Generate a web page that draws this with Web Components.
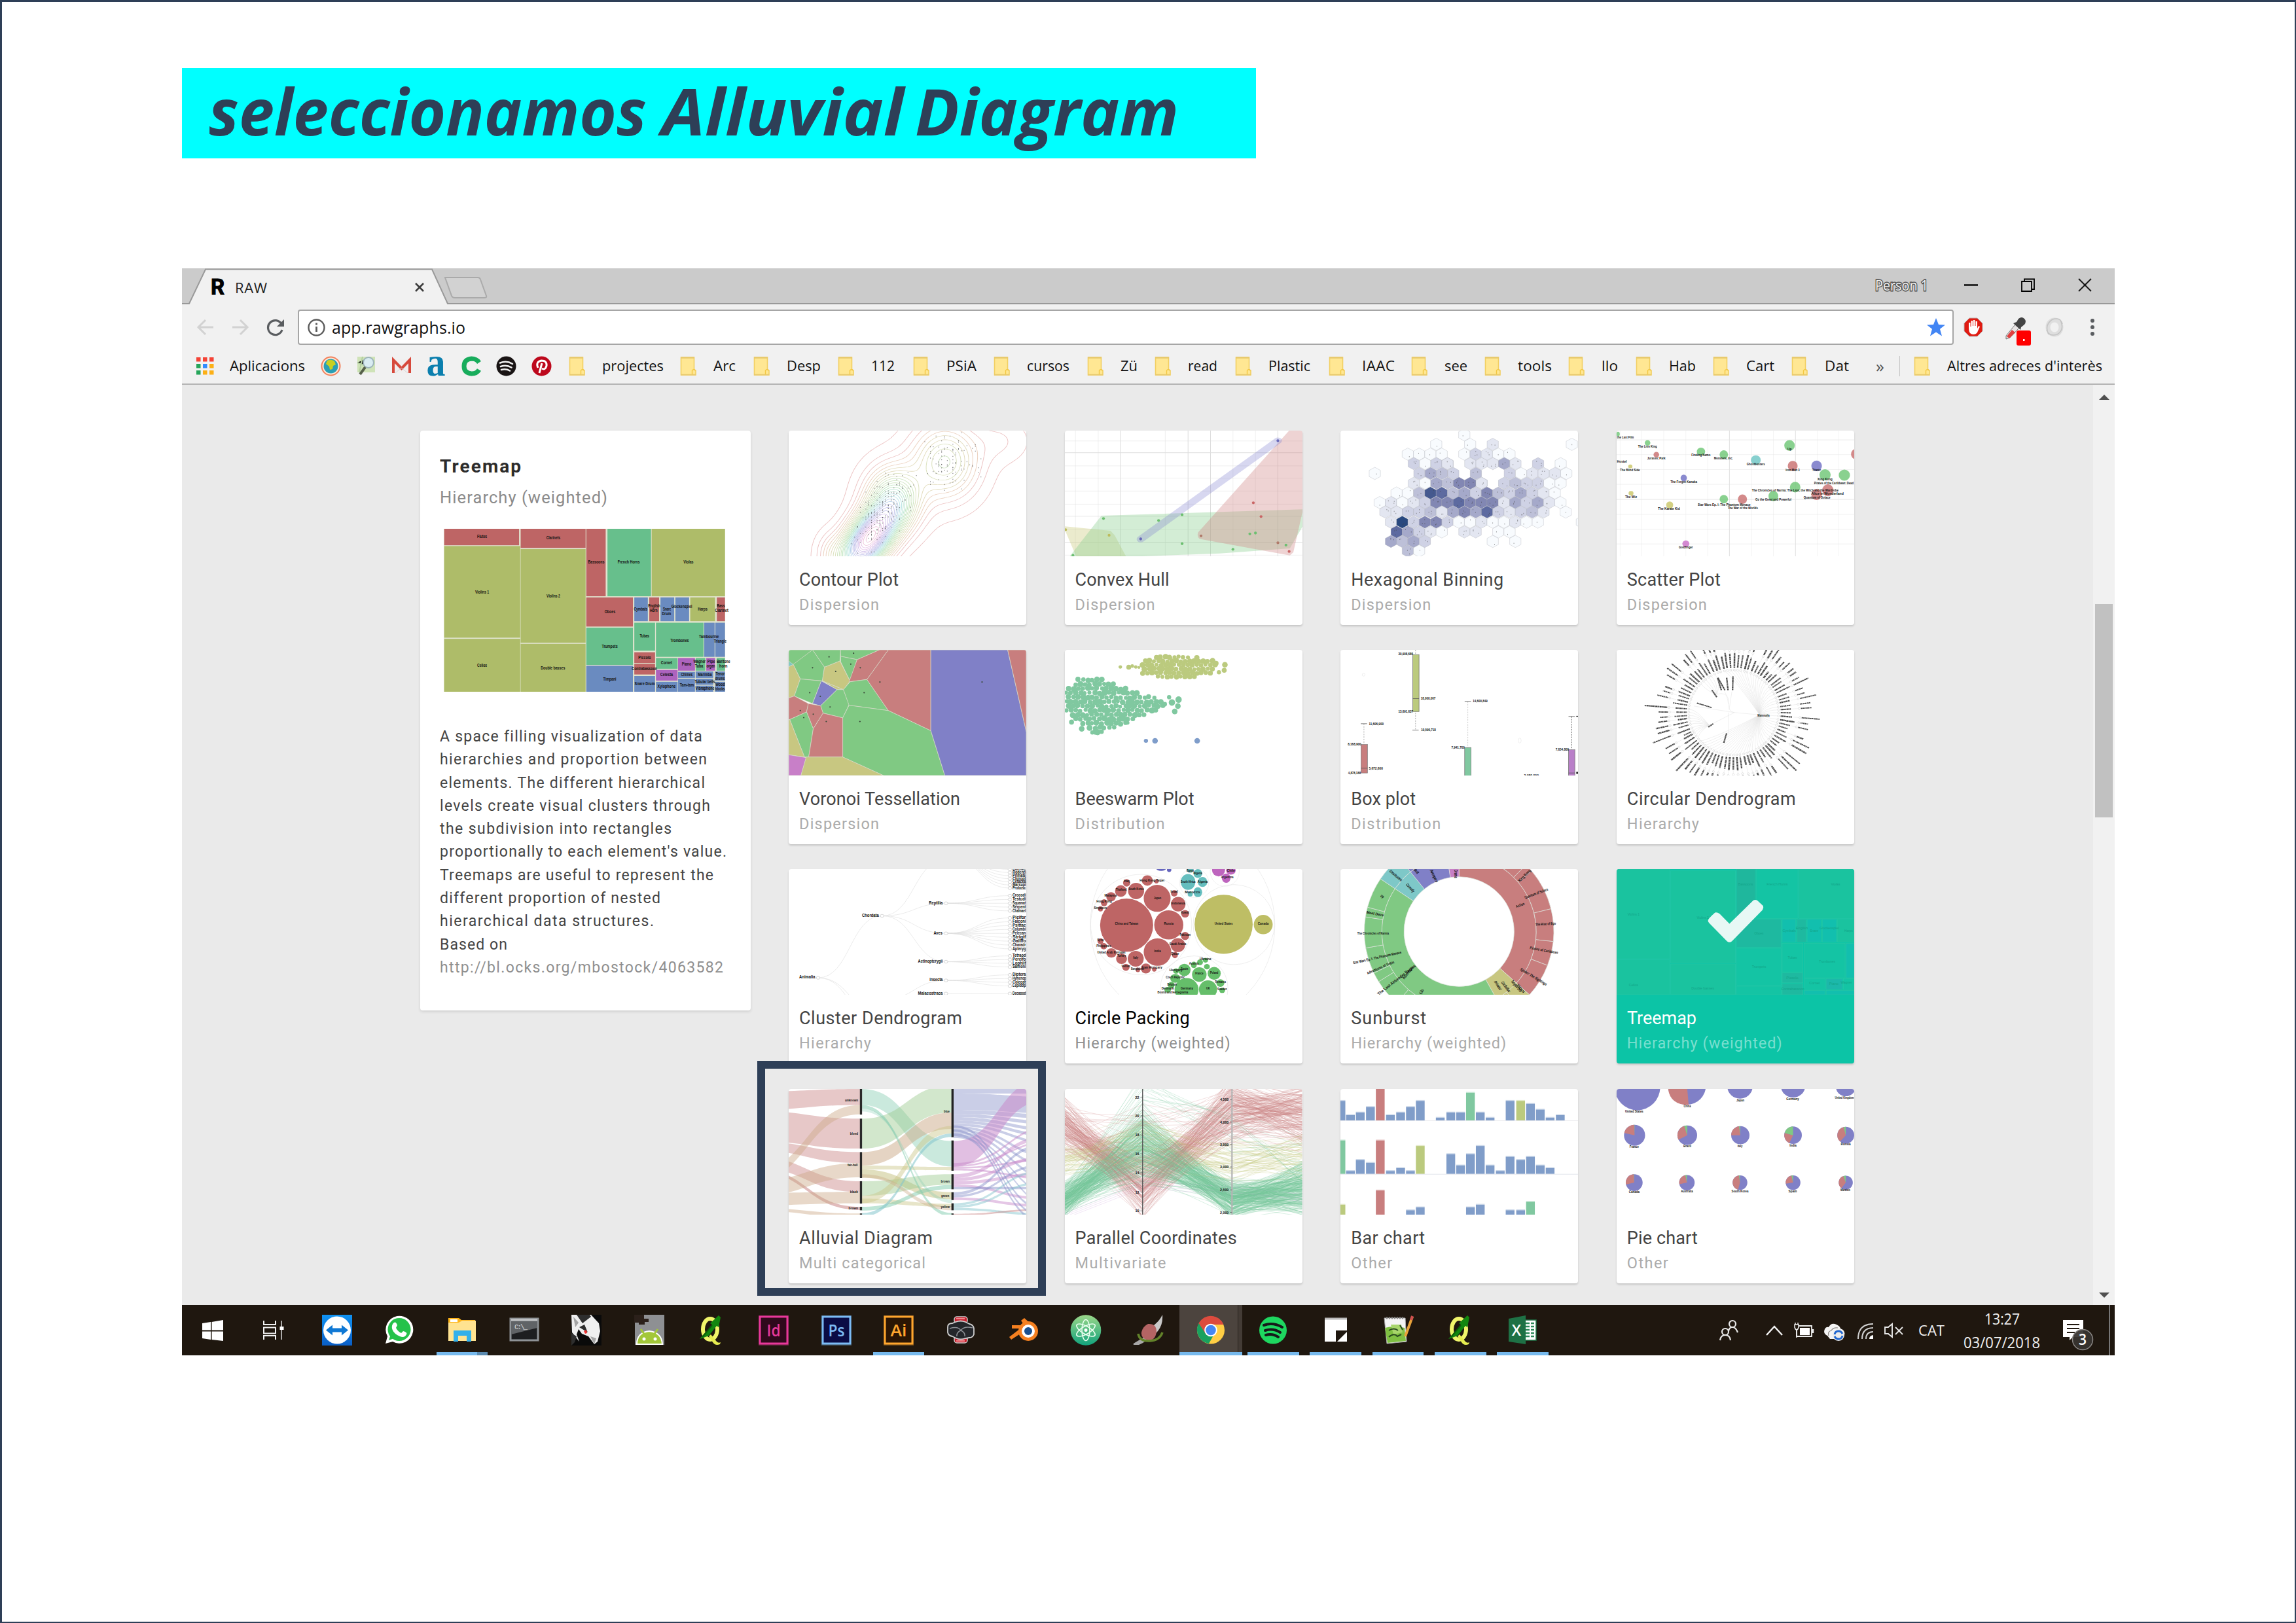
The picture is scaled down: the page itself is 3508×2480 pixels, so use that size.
<!DOCTYPE html>
<html lang="ca">
<head>
<meta charset="utf-8">
<title>seleccionamos Alluvial Diagram</title>
<style>
html,body{margin:0;padding:0;background:#fff}
body{font-family:"Open Sans","Noto Sans",sans-serif}
</style>
</head>
<body>
<slide-page>
  <title-banner slot="banner">seleccionamos Alluvial Diagram</title-banner>
  <browser-window>
    <tab-strip></tab-strip>
    <tool-bar></tool-bar>
    <bookmark-bar></bookmark-bar>
    <page-view></page-view>
    <task-bar></task-bar>
  </browser-window>
</slide-page>
<script>
const define=(name,html,after)=>customElements.define(name,class extends HTMLElement{
  connectedCallback(){
    if(this.shadowRoot)return;
    const r=this.attachShadow({mode:'open'});
    r.innerHTML=typeof html==='function'?html(this):html;
    if(after)after(this,r);
  }
});
/* Seeded generator so every render is the same. */
const rng=s=>()=>{s=(s*1664525+1013904223)>>>0;return s/4294967296};
const f=n=>Math.round(n*10)/10;

/* One line of text set to a known measure. */
define('fit-text',el=>`<style>:host{display:inline-block;white-space:nowrap;width:${el.getAttribute('w')}px}span{display:inline-block;transform-origin:0 50%}</style><span><slot></slot></span>`,(el,r)=>{
  const s=r.querySelector('span'),w=+el.getAttribute('w'),n=el.textContent.length,m=s.getBoundingClientRect().width;
  if(!m)return;
  if(m>w||el.hasAttribute('stretch'))s.style.transform=`scaleX(${w/m})`;
  else s.style.letterSpacing=(w-m)/Math.max(1,n-1)+'px';
});

/* ---------- icons: name -> [width, height, markup] ---------- */
const qgis=`<ellipse cx="22" cy="22" rx="11" ry="16" fill="none" stroke="#f0f56a" stroke-width="6"/><path d="M23 30l9 11q3 3 6 1l-1 3q-7 3-11-3l-6-9z" fill="#e6ec50"/><path d="M6 37l5-6 7-7 7-9-3-2 13-12 3 3-3 15-3-2-12 15-8 3z" fill="#12860f"/><path d="M10 34l15-18" stroke="#0c5c0a" stroke-width="2"/>`;
const adobe=(t,c,b)=>`<rect x="1" y="1" width="46" height="46" fill="${c}" opacity=".35"/><rect x="3" y="3" width="42" height="41" fill="${b}" stroke="${c}" stroke-width="3"/><text x="24" y="33" text-anchor="middle" font-family="Open Sans,sans-serif" font-weight="600" font-size="26" textLength="${t==='Id'?21:25}" lengthAdjust="spacingAndGlyphs" fill="${c}">${t}</text>`;
const I={
 back:[26,26,`<path d="M25 13H3M13 2L2 13l11 11" fill="none" stroke="#d2d2d2" stroke-width="3"/>`],
 forward:[26,26,`<path d="M1 13h22M13 2l11 11-11 11" fill="none" stroke="#d2d2d2" stroke-width="3"/>`],
 reload:[28,28,`<path d="M24 18a11 11 0 1 1-1-9" fill="none" stroke="#5a5d60" stroke-width="3.2"/><path d="M27 2v11H16z" fill="#5a5d60"/>`],
 info:[27,27,`<circle cx="13.5" cy="13.5" r="12" fill="none" stroke="#5a5a5a" stroke-width="2.4"/><path d="M13.5 12v8M13.5 6.500v3" stroke="#5a5a5a" stroke-width="2.8"/>`],
 star:[28,28,`<path d="M14 0l4 10 10 .5-8 6.300 3 10.700-9-6-9 6 3-10.700-8-6.300L10 10z" fill="#4285f4"/>`],
 hand:[30,30,`<path d="M9 1h12l8 8v12l-8 8H9l-8-8V9z" fill="#e01b12" stroke="#b9b0b0"/><path d="M8 16V8h2.500v6h1V5H14v8h1V4h2.500v9h1V6H21v11l2-4 2 1-4 9q-2 3-6 3-7 0-7-10z" fill="#fff"/>`],
 dropper:[44,44,`<path d="M4 28l14-17 6 5-14 15-6 2z" fill="#e8e4e4" stroke="#777"/><path d="M5 29l8-10 5 4-9 9z" fill="#e04040"/><path d="M15 9l5-2 3-5q5-4 9 0t0 9l-5 4-1 4z" fill="#444"/><rect x="20" y="20" width="22" height="23" rx="3" fill="#f00"/><rect x="30" y="33" width="2.500" height="3" fill="#fff"/>`],
 swirl:[30,32,`<ellipse cx="15" cy="16" rx="10" ry="11" fill="none" stroke="#dedede" stroke-width="7"/><path d="M6 27Q-1 12 12 4q12-4 15 7M24 5q7 15-5 22-12 4-16-7" fill="none" stroke="#c4c4c4" stroke-width="1.500"/>`],
 dots:[8,28,`<circle cx="4" cy="4" r="3" fill="#5a5d60"/><circle cx="4" cy="14" r="3" fill="#5a5d60"/><circle cx="4" cy="24" r="3" fill="#5a5d60"/>`],
 apps:[27,27,['#f44336','#f44336','#f44336','#25a55a','#2f8cff','#fcb016','#25a55a','#fcb016','#fcb016'].map((c,i)=>`<rect x="${i%3*10}" y="${(i/3|0)*10}" width="6.500" height="6.500" fill="${c}"/>`).join('')],
 globe:[31,31,`<circle cx="15.500" cy="15.500" r="14" fill="#ffe9da" stroke="#f2805a" stroke-width="2"/><circle cx="15.500" cy="15.500" r="11" fill="#2b9fb4"/><path d="M10 7q6-3 11 1l2 5-4 2-1 5-4 1-1-5-5-4z" fill="#c8d021"/>`],
 map:[29,30,`<path d="M1 1h27v24H1z" fill="#cfe3b8"/><path d="M1 10l10 4L20 2M4 25l5-24" stroke="#b4cfa0" stroke-width="2"/><circle cx="18" cy="10" r="8" fill="#d9ecf2" stroke="#9db4ba" stroke-width="2"/><path d="M13 17L5 28" stroke="#56604a" stroke-width="4"/>`],
 gmail:[29,26,`<path d="M1 3h27v21H1z" fill="#f1efef"/><path d="M2 24V4l12.500 13L27 4v20" fill="none" stroke="#d7493c" stroke-width="4"/><path d="M5 24l9-8 10 8" fill="none" stroke="#d5d5d5"/>`],
 aserif:[30,32,`<text x="15" y="31" text-anchor="middle" font-family="Liberation Serif,serif" font-weight="bold" font-size="62" textLength="29" lengthAdjust="spacingAndGlyphs" fill="#0b7fae">a</text>`],
 cgreen:[30,31,`<path d="M27 10Q23 4 15.500 4 4 5 4 15.500T15.500 27q8 0 11.500-6" fill="none" stroke="#18ac5c" stroke-width="7"/>`],
 spot:[31,31,`<circle cx="15.500" cy="15.500" r="15" fill="#191414"/><path d="M6 10.500q10-4 19 1.500M7 16q9-3 16.500 1.500M8 21q7-2 13 1.500" fill="none" stroke="#f1f1f1" stroke-width="2.600" stroke-linecap="round"/>`],
 pin:[31,31,`<circle cx="15.500" cy="15.500" r="15" fill="#bd081c"/><path d="M10 18q-4-9 5-11 9 0 8 8-2 7-7 4M16 11l-4 15" fill="none" stroke="#fff" stroke-width="3"/>`],
 folder:[25,29,`<path d="M1.500 1h20v19l2.500 1v7H1.500z" fill="#ffe793" stroke="#f2cf62" stroke-width="1.600"/><path d="M1 1.500h21" stroke="#e7c96d" stroke-width="2.500"/><path d="M1 27.500h23" stroke="#e7c96d" stroke-width="1.600"/><path d="M18.500 27v-6q3-3 5 0" fill="none" stroke="#f3c843" stroke-width="1.400"/>`],
 min:[21,21,`<path d="M0 10.500h21" stroke="#000" stroke-width="2.400"/>`],
 restore:[21,21,`<path d="M1 5h15v15H1zM5 5V1.500h15V17h-4" fill="none" stroke="#000" stroke-width="1.800"/>`],
 closewin:[21,21,`<path d="M1 1l19 19M20 1L1 20" stroke="#111" stroke-width="1.800"/>`],
 closetab:[14,14,`<path d="M1 1l12 12M13 1L1 13" stroke="#3c3c3c" stroke-width="2.500"/>`],
 win:[48,48,`<path d="M8 13l13-2v12.500H8zM22.500 11L40 8v15.500H22.500zM8 25.500h13V38L8 36zM22.500 25.500H40V40l-17.500-2z" fill="#fff"/>`],
 task:[48,48,`<path d="M9 9v6h18V9M9 38v-6h18v6M9 19.500h18v9H9z" fill="none" stroke="#f2f2f2" stroke-width="2"/><path d="M36 9v29" stroke="#ddd" stroke-width="1.500"/><rect x="33.500" y="18" width="6" height="5" fill="#fff"/>`],
 tv:[48,48,`<defs><linearGradient id="g" x2="0" y2="1"><stop stop-color="#1093f2"/><stop offset="1" stop-color="#0a5ec6"/></linearGradient></defs><rect x="1" y="0" width="46" height="47" fill="url(#g)"/><circle cx="24" cy="23.500" r="21" fill="#fff"/><path d="M7 23.500l10-8v5h14v-5l10 8-10 8v-5H17v5z" fill="#0f78d4"/>`],
 wa:[48,48,`<path d="M3 44l3-11a21 21 0 1 1 8 8z" fill="#fff"/><circle cx="24" cy="22.500" r="17.500" fill="#25c24a"/><path d="M8 39l3-9 5 6z" fill="#25c24a"/><path d="M16 12q3-2 5 4l-2 4q3 6 8 8l3-3q7 2 5 5-3 6-10 3-10-4-12-12-1-6 3-9z" fill="#fff"/>`],
 explorer:[48,48,`<path d="M3 5h16l4 3h21v8H3z" fill="#ffb51a"/><rect x="6" y="7" width="11" height="4" fill="#fff"/><path d="M3 12h16l5-3h21v31H3z" fill="#ffe391"/><path d="M11 41V24h27v17h-7v-9H18v9z" fill="#33b0ea"/>`],
 cmd:[48,48,`<rect x="3" y="6" width="42" height="33" fill="#1d1e20" stroke="#8e9296" stroke-width="3"/><path d="M4 8h40v12L4 30z" fill="#606366"/><path d="M4 8h40" stroke="#c4c6c8" stroke-width="3"/><text x="9" y="22" font-family="Liberation Mono,monospace" font-size="11" textLength="20" fill="#ddd">C:\\_</text>`],
 rhino:[48,48,`<rect x="1" y="0" width="46" height="47" fill="#0a0a0a"/><path d="M1 0h30l12 13 2 12-4 16-5 4-9-12-10-4-5-7-3 8 4 11L2 27z" fill="#efefef"/><path d="M9 0l9 13L31 3 29 0zM13 19l13 8-5-12zM1 28l8 5-3 9-5 5z" fill="#2e2e2e"/><path d="M30 33l6 12 3-9zM4 3l3 16 5-7z" fill="#a4a4a4"/><path d="M20 25l4-2 1 5-3 1z" fill="#e33"/>`],
 droid:[48,48,`<rect x="2" y="0" width="45" height="46" fill="#8e9093"/><path d="M1 0h15v6h7v5h-6v4h-9v-3H1z" fill="#2b201a"/><path d="M5 45q0-18 19-20 19 2 20 20z" fill="#a3c739" stroke="#fff" stroke-width="2"/><path d="M11 22l5 7M37 22l-5 7" stroke="#a3c739" stroke-width="3"/><circle cx="16" cy="37" r="2.500" fill="#fff"/><circle cx="33" cy="37" r="2.500" fill="#fff"/>`],
 qgis:[48,48,qgis],
 id:[48,48,adobe('Id','#e8389a','#30091c')],
 ps:[48,48,adobe('Ps','#7cbcf5','#0a0c45')],
 ai:[48,48,adobe('Ai','#ffa62e','#2b1604')],
 robot:[48,48,`<rect x="14" y="3" width="20" height="10" rx="4" fill="#c71f2d" stroke="#ccc" stroke-width="1.500"/><rect x="14" y="33" width="20" height="10" rx="4" fill="#c71f2d" stroke="#ccc" stroke-width="1.500"/><path d="M17 6h13M17 40h13" stroke="#f1888d" stroke-width="2"/><path d="M4 19q0-6 7-6l5-2q8-3 15 0l6 3q6 1 7 7v9q-2 5-7 5l-6 1q-7 3-14 0l-6-3q-6-1-7-6z" fill="#24262a" stroke="#d0d0d0" stroke-width="1.800"/><path d="M7 21q13-4 17 3-7 3-6 9M42 20q-13-3-18 4 7 3 6 9" fill="none" stroke="#8d9095" stroke-width="1.500"/>`],
 blender:[48,48,`<path d="M2 34l17-13H6v-5h19l-5-7 5-4 20 18-20 2L5 38z" fill="#f58020"/><circle cx="31" cy="25" r="15" fill="#f58020"/><circle cx="31" cy="25" r="10" fill="#fff"/><circle cx="31" cy="25" r="6" fill="#1a4f8e"/>`],
 atom:[48,48,`<defs><linearGradient id="g" x2="0" y2="1"><stop stop-color="#9bd789"/><stop offset="1" stop-color="#12a37c"/></linearGradient></defs><circle cx="24" cy="23.500" r="23.300" fill="url(#g)"/><g fill="none" stroke="#eafff0" stroke-width="1.600"><ellipse cx="24" cy="23.500" rx="6" ry="16"/><ellipse cx="24" cy="23.500" rx="6" ry="16" transform="rotate(60 24 23.500)"/><ellipse cx="24" cy="23.500" rx="6" ry="16" transform="rotate(120 24 23.500)"/></g><circle cx="24" cy="23.500" r="2.500" fill="#fff"/>`],
 bird:[48,48,`<path d="M46 0q2 25-22 36L16 25q22-8 30-25z" fill="#c9c9c9"/><path d="M3 46q-4-1 2-4l15-9 2 6q-5 4-12 7z" fill="#a8a8a8"/><path d="M24 14q13-1 13 12-2 14-13 13-11-3-10-12 2-9 10-13z" fill="#b46464"/><path d="M9 29q2 12 18 11 15-1 19-13" fill="none" stroke="#63832a" stroke-width="3.500"/>`],
 chrome:[48,48,`<circle cx="24" cy="23.500" r="21" fill="#ffce44"/><path d="M24 23.500L5.500 13a21 21 0 0 0 15.500 31l9-16z" fill="#19a15f"/><path d="M5.500 13a21 21 0 0 1 38 2H24l-8 14z" fill="#dd4b3e"/><circle cx="24" cy="23.500" r="9.800" fill="#fff"/><circle cx="24" cy="23.500" r="7.800" fill="#4587f2"/>`],
 spotg:[48,48,`<circle cx="24" cy="23.500" r="21" fill="#1ed760"/><path d="M10 16q14-5 28 3M12 24q12-4 23 3M13 31q10-3 19 3" fill="none" stroke="#16191a" stroke-width="4" stroke-linecap="round"/>`],
 sticky:[48,48,`<path d="M7 6h34v18H24v17H7z" fill="#fff"/><path d="M7 6h34" stroke="#bbb" stroke-width="3"/><path d="M41 26L26 41h15z" fill="#fff"/>`],
 npp:[48,48,`<path d="M3 5h32l2 36-30 3z" fill="#f4f4f4" stroke="#aaa"/><path d="M4 20q14-4 30 0l2 20-28 3z" fill="#7fbf42"/><path d="M13 15h16l2 12-14 3z" fill="#a7d56b"/><path d="M10 24q8-5 14 0M27 16l4 7M10 34q8-7 13-1l6-3" fill="none" stroke="#2a4a1f" stroke-width="2"/><path d="M6 5h28" stroke="#888" stroke-width="3" stroke-dasharray="2 2"/><path d="M46 3l-11 30" stroke="#e8a33a" stroke-width="4"/><path d="M46 2l-2 6" stroke="#d05050" stroke-width="4"/>`],
 excel:[48,48,`<rect x="22" y="8" width="22" height="31" fill="#fff" stroke="#1e7145" stroke-width="1.500"/><path d="M28 13h6M28 18h6M28 23h6M28 28h6M28 33h6M36 13h5M36 18h5M36 23h5M36 28h5M36 33h5" stroke="#2c8a5a" stroke-width="2.500"/><path d="M2 6l26-5v44L2 41z" fill="#1e7145"/><text x="14" y="32" text-anchor="middle" font-family="Open Sans,sans-serif" font-weight="600" font-size="23" fill="#fff">X</text>`],
 people:[30,32,`<g fill="none" stroke="#e8e8e8" stroke-width="2.200"><circle cx="20" cy="6" r="5"/><path d="M14 17q1-6 6-6t8 8"/><circle cx="9" cy="18" r="5"/><path d="M1 31q1-8 8-8t8 8"/></g>`],
 chev:[26,16,`<path d="M1 15L13 2l12 13" fill="none" stroke="#f2f2f2" stroke-width="2.400"/>`],
 batt:[31,24,`<path d="M4 5h23v16H4z" fill="none" stroke="#eee" stroke-width="1.800"/><rect x="9" y="8" width="15" height="11" fill="#fff"/><path d="M29 10v6" stroke="#eee" stroke-width="2.500"/><path d="M1 3h6v4q-1 4-3 4T1 7zM2 3V0M6 3V0M4 11v12" stroke="#eee" stroke-width="1.500" fill="#1f170f"/>`],
 cloud:[34,28,`<path d="M5 20q-7-3-4-10 2-4 6-3 4-8 12-4 5 2 6 6 8 3 6 10l-6 6H9z" fill="#f4f4f4"/><path d="M7 20q-2-6 4-8 3-5 10-4" fill="none" stroke="#8d8a88" stroke-width="1.200"/><circle cx="22" cy="19" r="9" fill="#ececec"/><path d="M16 18q1-5 6-5 4 0 6 4M28 20q-1 5-6 5-4 0-6-4" fill="none" stroke="#1f66d0" stroke-width="2.800"/>`],
 wifi:[25,26,`<g fill="none" stroke="#cfcfcf" stroke-width="2"><path d="M1 25Q1 2 24 2"/><path d="M7 25Q7 8 24 8"/><path d="M13 25q0-11 11-11"/></g><path d="M18 25q0-5 6-6v6z" fill="#fff"/>`],
 mute:[31,24,`<path d="M1 7h5l6-5v20l-6-5H1z" fill="none" stroke="#e8e8e8" stroke-width="1.900"/><path d="M17 7l11 11M28 7L17 18" stroke="#e8e8e8" stroke-width="1.900"/>`],
 note:[48,48,`<path d="M1 0h31v26H16l-5 5v-5H1z" fill="#fff"/><path d="M7 7h19M7 13h19M7 19h12" stroke="#1f170f" stroke-width="2"/><circle cx="31" cy="30" r="15.500" fill="#383431" fill-opacity=".94" stroke="#8a8785" stroke-width="1.500"/><text x="31" y="38" text-anchor="middle" font-family="Open Sans,sans-serif" font-weight="600" font-size="23" textLength="12" lengthAdjust="spacingAndGlyphs" fill="#fff">3</text>`]
};
define('app-icon',el=>{const [w,h,m]=I[el.getAttribute('name')];
 return `<style>:host{display:block;flex:none;width:${w}px;height:${h}px}svg{display:block;overflow:visible}</style><svg width="${w}" height="${h}" viewBox="0 0 ${w} ${h}">${m}</svg>`});

/* ---------- chart pictures ---------- */
const T=(x,y,w,t,fs=11,rot=0,c='#111')=>`<text x="${x}" y="${y}" text-anchor="middle" textLength="${w}" lengthAdjust="spacingAndGlyphs" font-size="${fs}" fill="${c}"${c==='#111'?' font-weight="bold"':''}${rot?` transform="rotate(${rot} ${x} ${y})"`:''}>${t}</text>`;
const R=(x,y,x2,y2,c,o=1)=>`<rect x="${x}" y="${y}" width="${f(x2-x)}" height="${f(y2-y)}" fill="${c}" opacity="${o}"/>`;
const E=(x,y,rx,ry,c,o=1,s='')=>`<ellipse cx="${f(x)}" cy="${f(y)}" rx="${f(rx)}" ry="${f(ry)}" fill="${c}" opacity="${o}" ${s}/>`;
const R1='#be6565',O1='#aebc69',G1='#67bf8c',B1='#6a8bc0',P1='#ad63be';
const charts={
treemap(){
 const S=[[142,286,474,329,R1,'Flutes',310,310,44],[142,331,479,570,O1,'Violins 1',310,455,62],[142,573,479,711,O1,'Cellos',310,646,44],
 [481,286,769,336,R1,'Clarinets',626,314,62],[481,339,769,583,O1,'Violins 2',626,465,60],[481,586,769,711,O1,'Double basses',624,653,108],
 [772,286,858,462,R1,'Bassoons',816,377,72],[866,286,1059,462,G1,'French Horns',960,377,98],[1062,286,1387,462,O1,'Violas',1225,377,44],
 [772,465,979,541,R1,'Oboes',877,506,48],[772,544,979,641,G1,'Trumpets',876,597,70],[772,643,979,711,B1,'Timpani',876,682,58],
 [985,465,1045,527,B1,'Cymbals',1013,500,60],[1051,465,1095,527,R1,'English',1073,491,54],[1101,465,1162,527,B1,'Snare',1130,500,36],[1167,465,1228,527,B1,'Glockenspiel',1195,492,92],[1233,465,1343,527,O1,'Harps',1288,500,42],[1351,465,1387,527,R1,'Bass',1369,491,36],
 [985,531,1077,604,G1,'Tubas',1030,570,42],[1081,531,1292,620,G1,'Trombones',1186,582,82],[1295,531,1341,620,B1,'Tambourine',1316,571,88],[1344,531,1387,620,B1,'Triangle',1366,583,56],
 [985,608,1077,636,R1,'Piccolo',1031,626,56],[985,638,1077,666,R1,'Contrabassoon',1030,655,112],[985,670,1077,711,B1,'Snare Drum',1031,694,90],
 [1081,623,1177,651,G1,'Cornet',1128,640,50],[1081,654,1177,682,P1,'Celesta',1128,670,56],[1081,685,1177,711,B1,'Xylophone',1128,700,80],
 [1179,623,1254,656,P1,'Piano',1217,643,42],[1179,659,1254,675,B1,'Chimes',1218,670,52],[1179,677,1254,711,B1,'Tam-tam',1218,698,62],
 [1257,623,1300,656,G1,'Wagner',1274,636,54],[1304,623,1343,656,P1,'Pipe',1326,636,34],[1350,623,1387,656,G1,'Baritone',1380,636,60],
 [1257,658,1335,675,B1,'Marimba',1298,670,62],[1257,677,1335,693,B1,'Tubular bells',1298,689,90],[1257,695,1335,711,B1,'Vibraphone',1298,706,84],[1343,658,1387,682,B1,'Tenor',1366,668,40],[1343,685,1387,711,B1,'Wood',1366,696,42]];
 return ['140 286 1248 425',R(140,286,1388,711,'#c9cda8',.55)+S.map(s=>R(...s.slice(0,5))).join('')+S.map(s=>T(s[6],s[7],s[8],s[5],12)).join('')+
 [[1071,503,34,'Horn'],[1128,512,40,'Drum'],[1372,503,60,'Clarinet'],[1272,648,36,'Tuba'],[1324,648,38,'organ'],[1380,648,36,'horn'],[1365,680,42,'drums'],[1365,708,42,'blocks']].map(a=>T(...a,12)).join('')];
},
contour(){
 const th=Math.atan2(-240,120),c=Math.cos(th),s=Math.sin(th);
 const D=(x,y)=>{const dx=x-275,dy=y-430,u=dx*c+dy*s,v=-dx*s+dy*c;
  const e=x-345,g=y-285,p=x-492,q=y-153,r=x-650,t=y-80;
  return 1.1*Math.exp(-.5*(u*u/7800+v*v/1900))+.5*Math.exp(-.5*(e*e/2700+g*g/5800))+.38*Math.exp(-.5*(p*p/3900+q*q/7600))+.06*Math.exp(-.5*(r*r/2600+t*t/2600))+.1*Math.exp(-.5*((x-165)**2/700+(y-475)**2/2200))};
 const cols=['#edc4c4','#ecd2c0','#e3dcbd','#dce2bf','#cde5bf','#bfe5c1','#bce5d4','#bce5e6','#bcd4ec','#c2c2ea','#d2c0ea','#e6c2e8','#eec6dc'];
 const n=34,out=Array(n).fill('');const st=6,G=[];
 for(let j=0;j<=78;j++){G[j]=[];for(let i=0;i<=115;i++)G[j][i]=D(44+i*st,38+j*st)}
 for(let k=0;k<n;k++){const L=.02+k*.039;
  for(let j=0;j<78;j++)for(let i=0;i<115;i++){
   const a=G[j][i],b=G[j][i+1],d=G[j+1][i+1],e=G[j+1][i],x=44+i*st,y=38+j*st,P=[];
   if(a<L!==b<L)P.push([x+st*(L-a)/(b-a),y]);if(b<L!==d<L)P.push([x+st,y+st*(L-b)/(d-b)]);
   if(e<L!==d<L)P.push([x+st*(L-e)/(d-e),y+st]);if(a<L!==e<L)P.push([x,y+st*(L-a)/(e-a)]);
   if(P.length>1)out[k]+=`M${f(P[0][0])} ${f(P[0][1])}L${f(P[1][0])} ${f(P[1][1])}`}}
 const r=rng(9);let dots='';
 for(let i=0;i<300;i++){const b=r()<.38,g=()=>(r()+r()+r()-1.5)/1.5;const x=b?505+g()*130:310+g()*115,y=b?150+g()*140:330+g()*170-(x-310)*.9;dots+=R(f(Math.round(x/8)*8+2),f(y),Math.round(x/8)*8+3.8,y+3,'#4a4a4a',.75)}
 return ['47 42 677 449',out.map((d,k)=>`<path d="${d}" fill="none" stroke="${cols[Math.min(12,k*.45|0)]}" stroke-width="1.900"/>`).join('')+dots];
},
hull(){
 let g='';for(const x of [864,992,1120,1185,1249,1377,1441,929,1313])g+=`<path d="M${x} 42V491" stroke="#dedede" stroke-width="${[992,1185,1249,1441].includes(x)?2:1}"/>`;
 for(const y of [79,121,168,212,258,305,348,395,442,487])g+=`<path d="M834 ${y}H1512" stroke="#dedede" stroke-width="${[121,348,442].includes(y)?2:1}"/>`;
 g+=`<path d="M834 384l130 16 12 16 32 75H866l-32-94z" fill="#cfcf88" opacity=".42"/><path d="M938 346l574-23v60l-37 80-200 18-220 10H848z" fill="#8ccf90" opacity=".38"/>
 <path d="M1473 42h39v285l-27 150-10 11-257-59q-9-10-4-24z" fill="#cf8585" opacity=".36"/><path d="M1050 430L1441 78" stroke="#8484d0" stroke-opacity=".32" stroke-width="23" stroke-linecap="round"/>`;
 for(const [x,y,c] of [[944,356,'#6cbf70'],[1101,363,'#6cbf70'],[1168,343,'#6cbf70'],[1168,446,'#6cbf70'],[1361,411,'#6cbf70'],[1377,408,'#6cbf70'],[1313,466,'#6cbf70'],[1464,451,'#6cbf70'],[857,488,'#6cbf70'],[836,396,'#bcbc5c'],[960,416,'#bcbc5c'],[1371,300,'#c96565'],[1393,349,'#c96565'],[1222,418,'#b07a6a'],[1441,443,'#b07a6a'],[1473,474,'#c96565'],[1050,429,'#6868b8'],[1441,78,'#6868b8']])g+=E(x,y,4,5,c);
 return ['834 42 677 449',g];
},
hex(){
 const C=['#f8fbfe','#e3e6f1','#cfd2e5','#bdc0d8','#a5a9ca','#8287b3','#5d6aa0','#45598f','#28487f'];
 const rows=[[57,405,'0'],[91,325,'0..0.1......0'],[126,244,'0000.02100'],[160,261,'2021.11141.2.0'],[160,357,'1'],[195,150,'0'],[195,277,'2432.3..201110'],[230,261,'1043552'],[230,454,'1.232200'],[265,212,'003763425324210'],[299,164,'0'],[299,196,'1012556555142410'],[333,180,'112231454621231'],[333,694,'0'],[369,196,'18255200100100'],[404,212,'64210.11.00'],[438,196,'4342'],[438,486,'0.0'],[472,244,'30'],[369,740,'0']];
 let o='';const r=rng(4);
 for(const [y,x0,s] of rows)[...s].forEach((k,i)=>{if(k==='.')return;const x=x0+i*32.2;
  o+=`<path d="M${f(x)} ${y-22}l16.100 11v22l-16.100 11l-16.100-11v-22z" fill="${C[+k]}" stroke="#9aa0a8" stroke-width=".9" stroke-opacity=".7"/>`;
  const n=k==='0'?1:2+(r()*2|0);for(let j=0;j<n;j++){const a=x-9+r()*18,b=y-11+r()*20;o+=R(f(a),f(b),a+1.500,b+3.500,'#444',.65)}});
 return ['52 42 677 449',o];
},
scatter(){
 let o='';for(const x of [850,911,974,1037,1099,1161,1224,1286,1349,1411,1472])o+=`<path d="M${x} 42V491" stroke="#e2e2e2" stroke-width="${[1161,1349].includes(x)?2:.8}"/>`;
 for(const y of [75,128,181,234,288,341,395,447])o+=`<path d="M840 ${y}H1516" stroke="#e2e2e2" stroke-width="${[75,288].includes(y)?2:1}"/>`;
 const g='#6fc776',r='#c97070',b='#7070c4',y='#c9c668',c='#6cc6c4';
 for(const p of [[844,54,5,8,g],[928,86,8,10,g],[1080,117,12,14,g],[1145,128,12,16,g],[1332,95,15,19,g],[953,128,8,10,r],[1236,147,14,17,c],[1341,168,14,18,r],[1409,168,15,19,b],[1520,126,13,18,r],[879,170,6,7,y],[1031,211,9,12,b],[1433,200,16,20,g],[1488,201,16,20,g],[1348,244,15,19,g],[1441,255,16,21,r],[1409,270,15,20,r],[881,266,7,8,y],[991,308,10,13,y],[1145,287,12,15,g],[1198,287,13,17,r],[1286,276,14,18,g],[1037,446,10,12,'#cb6fc8']])o+=E(p[0],p[1],p[2],p[3],p[4],.82);
 for(const a of [[865,69,48,'the Last Film'],[928,102,54,'The Lion King'],[953,144,52,'Jurassic Park'],[1080,134,54,'Finding Nemo'],[1144,144,54,'Monsters, Inc.'],[1236,165,52,'Ghostbusters'],[1332,111,12,'Up'],[855,156,28,'Hostel'],[878,188,56,'The Blind Side'],[1031,228,76,'The Forgot Kanaka'],[1341,188,40,'Iron Man 3'],[1409,188,24,'Titanic'],[1433,219,42,'King Kong'],[1458,233,112,'Pirates of the Caribbean: Dead'],[1348,260,246,'The Chronicles of Narnia: The Lion, the Witch and the Wardrobe'],[1440,272,92,'Alice in Wonderland'],[1410,286,76,'Quantum of Solace'],[881,283,34,'The Wiz'],[989,324,62,'The Karate Kid'],[1146,311,150,'Star Wars Ep. I: The Phantom Menace'],[1199,323,86,'The War of the Worlds'],[1286,293,102,'Oz the Great and Powerful'],[1037,464,40,'Goldfinger']])o+=T(...a,13);
 return ['840 42 676 449',o];
},
voronoi(){
 const g='#80c983',r='#c87e7e',b='#8080c7',y='#c8c781';
 const P=[[g,'47 826 115 826 60 882 47 870'],[g,'115 826 195 826 193 866 149 888'],[g,'195 826 306 826 242 861 195 849'],[g,'115 826 149 888 143 937 80 930 60 878'],[g,'195 849 242 861 222 938 195 868'],[y,'149 888 193 866 222 938 203 968 143 937'],[y,'47 886 60 878 80 930 63 991 47 998'],[g,'80 930 140 937 115 1018 63 991'],[b,'140 937 185 968 138 1026 115 1018'],[y,'143 937 203 968 185 968'],[g,'185 968 203 968 219 1022 201 1069 145 1052 138 1026'],[r,'242 861 306 826 331 826 270 932 219 940'],[g,'203 968 222 940 270 932 331 1043 219 1024'],[r,'331 826 452 826 452 1115 331 1043 270 932'],[g,'201 1069 219 1024 331 1043 452 1115 492 1275 317 1275 201 1209'],[b,'452 826 671 826 724 1118 724 1275 492 1275 452 1115'],[r,'671 826 724 826 724 1118'],[r,'47 998 63 991 103 1018 98 1048 50 1075 47 1075'],[r,'103 1018 138 1026 145 1052 117 1108 98 1048'],[g,'50 1075 98 1048 117 1108 104 1209 92 1209'],[y,'47 1075 50 1075 92 1209 47 1201'],[r,'145 1052 201 1069 201 1209 104 1209 117 1108'],['#c87fc8','47 1201 97 1211 82 1275 47 1275'],[y,'97 1209 201 1209 317 1275 82 1275'],['#7cc8c4','47 866 60 878 47 886']];
 let o=P.map(([c,p])=>`<polygon points="${p}" fill="${c}" stroke="#d5d9c8" stroke-width="1.500"/>`).join('');
 for(const [x,y2] of [[115,890],[162,851],[232,838],[224,877],[181,903],[251,890],[107,979],[137,992],[262,979],[307,941],[598,941],[165,1030],[80,1043],[117,1056],[90,1068],[154,1082],[250,1082]])o+=E(x,y2,2,2.5,'#3a4a3a');
 return ['47 826 677 449',o];
},
bees(){
 const r=rng(21);let o='';
 const top=x=>x<880?975-(x-834)*1.2:x<950?918+(x-880)*.2:935+(x-950)*.43,bot=x=>x<920?1045+(x-834)*1:1130-(x-920)*.5;
 for(let j=0,y=918;y<1135;y+=15.5,j++)for(let x=838+(j%2)*6.500;x<1118;x+=13.5){const X=x+r()*4-2,Y=y+r()*5-2.5;if(Y>top(X)&&Y<bot(X)){const k=.8+r()*.45;o+=E(X,Y,7*k,8.800*k,'#80c8a0')}}
 for(const a of [[1131,995,6],[1158,1004,9],[1139,1014,9],[1156,1027,8],[1147,1046,8],[1119,1020,6],[1013,1087,5],[922,1118,9],[882,1108,8],[853,1084,7]])o+=E(a[0],a[1],a[2],a[2]*1.300,'#80c8a0');
 for(let j=0,y=852;y<925;y+=14,j++)for(let x=1056+(j%2)*6;x<1262;x+=12.800){const X=x+r()*3-1.5,Y=y+r()*4-2;const h=1-Math.abs(X-1150)/140;if(Math.abs(Y-887)<44*Math.sqrt(Math.max(0,h))){const k=.8+r()*.4;o+=E(X,Y,7*k,8.800*k,'#bbca7e')}}
 for(const a of [[992,887,5],[1016,888,7],[1026,884,5],[1036,887,5],[1045,889,4],[1265,874,7],[1290,879,8],[1288,899,7],[1273,906,6]])o+=E(a[0],a[1],a[2],a[2]*1.250,'#bbca7e');
 o+=E(1065,1151,6,7,'#7f9dca')+E(1091,1151,8,10,'#7f9dca')+E(1211,1151,8,10,'#7f9dca');
 return ['834 826 677 449',o];
},
box(){
 let o='';const v=(x,y,y2,c='#999')=>`<path d="M${x} ${y}V${y2}" stroke="${c}" stroke-width="1.500" stroke-dasharray="5 4"/>`,h=(x,y)=>`<path d="M${x-9} ${y}h18" stroke="#666" stroke-width="2"/>`;
 o+=v(266,826,1113)+v(119,1090,1163)+v(415,1011,1175,'#bbb')+v(711,1064,1182,'#333');
 o+=h(119,1090)+h(415,1010)+h(711,1064)+h(266,1113);
 const B=(x,y,y2,c)=>`<rect x="${x-9}" y="${y}" width="18" height="${y2-y}" fill="${c}" stroke="#777" stroke-width="1.500"/>`;
 o+=B(267,843,1047,'#bbca7e')+B(120,1164,1266,'#c87e7e')+B(415,1175,1290,'#80c8a0')+B(711,1183,1290,'#b97fc8');
 o+=`<path d="M258 1000h18M111 1249h18M702 1266h18" stroke="#555" stroke-width="2"/>`;
 for(const a of [[238,845,42,'30,908,686'],[302,1004,42,'18,000,067'],[238,1051,42,'13,691,637'],[303,1117,42,'10,590,718'],[154,1094,42,'11,606,900'],[450,1014,42,'14,600,849'],[92,1168,38,'8,168,900'],[153,1253,40,'5,672,600'],[92,1270,36,'4,878,188'],[387,1179,38,'7,941,700'],[684,1187,38,'7,654,800'],[596,1279,42,'3,980,000']])o+=T(...a,13);
 o+=`<rect x="724" y="1062" width="5" height="3" fill="#222"/><rect x="724" y="1262" width="5" height="7" fill="#222"/><ellipse cx="118" cy="915" rx="4" ry="5" fill="none" stroke="#ddd"/><ellipse cx="563" cy="1150" rx="4" ry="9" fill="none" stroke="#ddd"/>`;
 return ['52 826 677 449',o];
},
circ(){
 const cx=1173,cy=1050,r=rng(33),N=84;let o='',l='',n='';
 const node=(x,y)=>n+=E(x,y,2.8,3.6,'#fff',1,'stroke="#c4c4c4" stroke-width="1"');
 const lab=(x,y,a,k)=>{const c=Math.cos(a),s=Math.sin(a);o+=`<path d="M${f(x)} ${f(y)}l${f(k*c)} ${f(k*1.25*s)}" stroke-width="${f(4+r()*1.400)}" stroke-dasharray="${f(2+r()*2)} .8 ${f(3+r()*3)} ${f(.7+r())} ${f(1.500+r())} .6"/>`};
 for(let i=0;i<N;i++){const a=(i+.25*r())/N*2*Math.PI,c=Math.cos(a),s=Math.sin(a);
  const x=cx+128*c,y=cy+152*s,left=c<-.75;
  const hx=left?1103:1247,hy=left?1095:1058;
  if(left?s>-.1:!(c<-.25&&s<0)) l+=`M${hx} ${hy}Q${f(left?1070:cx+c*70+20)} ${f(cy+s*118)} ${f(x)} ${f(y)}`;
  if(!left&&c<-.3&&s<0&&s>-.93) l+=`M1125 985Q${f(x+20)} ${f(y+30)} ${f(x)} ${f(y)}`;
  node(x,y);
  const k=22+r()*22;lab(x+6*c,y+8*s,a,k);
  const far=i%4!==0||r()<.3;
  if(far){const b=54+r()*8,k2=20+r()*r()*50;node(x+b*c,y+b*1.22*s);lab(x+(b+5)*c,y+(b+5)*1.22*s,a,k2);l+=`M${f(x+(k+10)*c)} ${f(y+(k+10)*1.22*s)}L${f(x+(b-3)*c)} ${f(y+(b-3)*1.22*s)}`}}
 l+='M1175 1050L1245 1058M1175 1050L1060 1027M1175 1050Q1155 1050 1158 1000Q1150 975 1125 985M1175 1050L1105 1095M1158 1050V1125M1160 1040L1168 975M1158 1020Q1155 990 1147 975';
 const dash=(x,y,d,e)=>o+=`<path d="M${x} ${y}l${d} ${e}" stroke-width="4.200" stroke-dasharray="4 .8 2.500 .8"/>`;
 for(const a of [[1148,970,-20,-45],[1157,970,-4,-45],[1170,970,1,-50],[1138,970,-11,-44],[1125,995,-14,-25],[1110,1032,-42,-16],[1101,1102,14,-12],[1145,1158,8,-34]])dash(...a);
 return ['840 826 676 449',`<path d="${l}" fill="none" stroke="#e2e2e2" stroke-width="1.100"/><g stroke="#444" fill="none">${o}</g>${n}${T(1258,1064,34,'Mammalia',13)}`];
},
cluster(){
 let l='',n='',t='';const L=(x,y,x2,y2)=>l+=`M${x} ${y}C${(x+x2)/2} ${y} ${(x+x2)/2} ${y2} ${x2} ${y2}`,N=(x,y)=>n+=E(x,y,5,5,'#fff',1,'stroke="#bbb" stroke-width="1.200"');
 L(180,435,356,223);L(180,435,356,560);L(180,435,356,600);L(356,223,532,30);L(356,223,532,180);L(356,223,532,283);L(356,223,532,380);L(356,510,532,444);
 for(const [x,y,w,s] of [[150,438,44,'Animalia'],[324,227,46,'Chordata'],[504,183,38,'Reptilia'],[510,286,24,'Aves'],[489,384,68,'Actinopterygii'],[505,447,36,'Insecta'],[489,493,68,'Malacostraca']])t+=T(x,y,w,s,15);
 for(const a of [[180,435],[356,223],[532,180],[532,283],[532,380],[532,444],[532,489]])N(...a);
 const G=[[10,64,128,['Carnivora','Rodentia','Primates','Chiroptera','Cetacea','Marsupial','Proboscidea']],[180,154,206,['Crocodilia','Testudines','Squamata','Serpentes','Chamaeleo']],[283,230,336,['Piciform','Falconif','Psittacif','Columbif','Pelecanif','Strigif','Galliform','Charadri','Apterygi']],[380,360,398,['Tetraodon','Perciform','Lophiiform','Salmonif']],[444,425,463,['Diptera','Hymenopt','Coleoptera','Lepidopt']],[489,489,489,['Decapoda']]];
 for(const [y,a,b,w] of G)w.forEach((s,i)=>{const yy=w.length<2?a:a+(b-a)*i/(w.length-1);L(532,y,708,yy);N(708,yy);t+=`<text x="715" y="${f(yy+4)}" font-size="15" font-weight="bold" textLength="37" lengthAdjust="spacingAndGlyphs" fill="#111">${s.slice(0,7)}</text>`});
 return ['99 63 654 430',`<path d="${l}" fill="none" stroke="#e0e0e0" stroke-width="1.300"/>${n}${t}`];
},
packing(){
 const r='#be6565',g='#65be6a',c='#65bebe';let o='';
 o+=E(1184,254,254,330,'none',1,'stroke="#ddd"')+E(1070,253,139,172,'none',1,'stroke="#ddd"')+E(1325,253,112,137,'none',1,'stroke="#ddd"')+E(1216,470,93,110,'none',1,'stroke="#ddd"')+E(1216,110,40,50,'none',1,'stroke="#e4e4e4"')+E(1300,70,40,52,'none',1,'stroke="#e4e4e4"');
 for(const a of [[1030,255,73,91],[1146,254,40,50],[1114,163,37,46],[1115,347,38,47],[1056,138,22,28],[1055,370,22,27],[1014,138,16,20],[1172,183,20,25],[1171,323,20,24],[1087,102,15,18],[1083,403,14,17],[1016,370,15,18],[987,158,13,16],[988,350,14,16],[968,178,9,12],[958,199,7,9],[1030,110,10,13],[1028,399,10,12],[1161,146,9,11],[1191,216,11,13],[1191,292,11,14],[1163,357,8,11],[967,327,9,11],[958,310,8,10],[1112,105,6,7],[1106,407,6,7],[1061,408,6,8]])o+=E(...a,r);
 o+=E(1297,252,80,101,'#bebe65')+E(1406,253,26,33,'#bebe65');
 for(const a of [[1199,107,20,27],[1226,78,12,15],[1239,107,13,17],[1226,142,12,17],[1205,66,9,9],[1205,148,7,9]])o+=E(...a,c);
 for(const a of [[1283,66,18,22],[1317,68,13,14],[1304,94,12,16]])o+=E(...a,'#be65be');o+=E(1125,60,14,9,'#6565be')+E(1147,66,6,7,'#6565be');
 for(const a of [[1195,475,33,39],[1254,475,25,31],[1230,424,20,25],[1271,420,18,22],[1189,408,17,21],[1164,437,14,15],[1288,453,11,13],[1293,478,8,9],[1166,412,8,9],[1153,460,9,11],[1215,391,8,11],[1232,382,8,10],[1247,375,7,8],[1251,397,8,9],[1143,476,9,10]])o+=E(...a,g);
 for(const a of [[1030,254,64,'China and Taiwan'],[1146,254,26,'Russia'],[1115,165,20,'Japan'],[1115,347,18,'India'],[1056,134,42,'South Korea'],[1055,370,14,'Italy'],[1015,137,30,'Thailand'],[1172,183,38,'Indonesia'],[1171,323,46,'Saudi Arabia'],[1100,106,68,'Hong Kong Taipei'],[1100,404,56,'Iran Hungary'],[1016,364,24,'Turkey'],[986,156,34,'Malaysia'],[988,351,78,'United Arab Emirates'],[968,178,42,'Hong Kong'],[958,199,36,'Singapore'],[1030,107,16,'Iraq'],[1028,399,24,'Vietnam'],[1161,144,20,'Israel'],[1191,215,22,'Kuwait'],[1191,292,30,'Pakistan'],[1163,357,22,'Qatar'],[967,329,40,'Philippines'],[958,310,18,'Syria'],[1060,409,36,'Bangladesh'],[1297,253,50,'United States'],[1406,253,30,'Canada'],[1199,110,40,'South Africa'],[1226,80,24,'Nigeria'],[1239,110,28,'Algeria'],[1211,147,42,'Morocco'],[1205,72,20,'Egypt'],[1307,94,34,'Argentina'],[1317,73,22,'Chile'],[1196,474,34,'Germany'],[1254,474,10,'UK'],[1230,424,22,'France'],[1271,422,22,'Poland'],[1189,407,20,'Spain'],[1164,437,52,'Czech Republic'],[1288,453,30,'Romania'],[1293,478,26,'Sweden'],[1166,413,36,'Hungary'],[1155,462,26,'Belgium'],[1215,391,26,'Austria'],[1247,375,32,'Ukraine'],[1143,476,34,'Denmark'],[1157,489,84,'Bosnia and Herzegovina']])o+=T(...a,12);
 return ['860 63 654 430',o];
},
sunburst(){
 const cx=390,cy=277,q=(a,rx)=>[f(cx+rx*Math.sin(a*Math.PI/180)),f(cy-rx*1.196*Math.cos(a*Math.PI/180))];
 const A=(a,b,r0,r1,c)=>{const l=b-a>180?1:0,p=q(a,r1),s=q(b,r1),t=q(b,r0),u=q(a,r0);return `<path d="M${p}A${r1} ${f(r1*1.196)} 0 ${l} 1 ${s}L${t}A${r0} ${f(r0*1.196)} 0 ${l} 0 ${u}z" fill="${c}" stroke="#dde3dc" stroke-width="1.500"/>`};
 const g='#80c983',r='#c87e7e',b='#8080c7',y='#c8c781',c='#7ec8c8',m='#c77fc6';
 let o=A(0,132,157,220,r)+A(132,151,157,220,y)+A(151,304,157,220,g)+A(304,321,157,220,c)+A(321,351,157,220,b)+A(351,360,157,220,m);
 const S=[[0,20,r],[20,36,r],[36,45,r],[45,50,r],[50,76,r],[76,96,r],[96,111,r],[111,132,r],[132,142,y],[142,151,y],[151,205,g],[205,221,g],[221,238,g],[238,244,g],[244,260,g],[260,279,g],[279,285,g],[285,304,g],[304,321,c],[321,351,b],[351,360,m]];
 for(const [a,e,k] of S)o+=A(a,e,220,270,k);
 for(const a of [[566,190,26,'Action',13,-25],[612,150,72,'Quantum of Solace',13,-24],[637,255,58,'The Rise of Ego',13,-4],[631,345,82,'Pirates of Caribbean',13,12],[600,435,92,'Spider: The Sightings',13,36],[580,88,50,'King Kong',13,-50],[169,160,10,'Up',13,30],[150,220,50,'Meet Dave',13,12],[145,286,90,'The Chronicles of Narnia',13,0],[158,370,142,'Star Wars Ep. I: The Phantom Menace',13,-15],[168,404,86,'Adventures of Tintin',13,-27],[215,445,145,'The Last Airbender Begins',13,-43],[248,420,50,'Adventure',13,-55],[287,484,16,'Kids',13,-72],[207,88,48,'Ghostbusters',13,45],[248,130,34,'Comedy',13,52],[315,88,46,'Avengers',13,68],[265,73,18,'Bolt',13,55],[377,80,28,'Drama',13,90],[497,463,34,'Animated',13,62],[520,468,40,'Cat Ballou',13,58],[550,466,46,'Tangled One',13,55],[562,474,34,'Titan',13,52]])o+=T(...a);
 return ['52 63 677 430',o];
},
sel(){
 const S=[[840,63,991,370],[840,373,991,493],[994,68,1178,385],[994,388,1178,493],[1181,63,1235,232],[1238,63,1356,232],[1359,63,1516,232],[1181,235,1308,331],[1181,334,1308,461],[1181,464,1308,493],[1311,235,1350,313],[1353,235,1379,313],[1382,235,1422,313],[1425,235,1465,313],[1468,235,1516,313],[1311,317,1370,415],[1374,317,1490,435],[1493,317,1516,435],[1311,418,1370,452],[1311,455,1370,493],[1374,438,1433,475],[1436,438,1482,475],[1485,438,1516,475],[1374,478,1433,493],[1436,478,1516,493]];
 const c={4:'#1fb79d',7:'#1eb9a0',18:'#1eb9a0',19:'#1eb9a0',11:'#1eb9a0',21:'#1cb8aa',12:'#12bfae',13:'#12bfae',10:'#12bfae',17:'#12bfae',23:'#12bfae',24:'#12bfae'};
 let o=S.map((s,i)=>`<rect x="${s[0]}" y="${s[1]}" width="${s[2]-s[0]}" height="${s[3]-s[1]}" fill="${c[i]||(i<4||i===6||i===14?'#1ac39f':'#14c4a4')}" stroke="#27c5a5" stroke-width="1.500"/>`).join('');
 for(const a of [[888,221,34,'Violins 1'],[1085,234,34,'Violins 2'],[888,465,26,'Cellos'],[1085,474,64,'Double basses'],[1207,120,42,'Bassoons'],[1297,120,60,'French Horns'],[1463,120,26,'Violas'],[1245,287,26,'Oboes'],[1245,402,40,'Trumpets'],[1331,279,38,'Cymbals'],[1367,269,34,'English'],[1402,279,24,'Snare'],[1445,269,54,'Glockenspiel'],[1500,279,24,'Harps'],[1340,370,26,'Tubas'],[1439,383,46,'Trombones'],[1340,439,34,'Piccolo'],[1341,477,66,'Contrabassoon'],[1403,458,30,'Cornet'],[1458,460,26,'Piano'],[1494,455,32,'Wagner']])o+=T(...a,12,0,'#12a489');
 return ['840 63 676 430',o+`<path d="M1100 240q-1-6 20-28 6-2 13 4l28 34 68-80q6-4 12 1l16 18q2 7-2 14l-87 107q-7 7-14 0l-51-63q-3-4-3-7z" fill="#e7f8f5"/>`];
},
alluvial(){
 const rb=(x0,a,b,x1,c,d,k,o=.45)=>{const m=(x0+x1)/2;return `<path d="M${x0} ${f(a)}C${m} ${f(a)} ${m} ${f(c)} ${x1} ${f(c)}V${f(d)}C${m} ${f(d)} ${m} ${f(b)} ${x0} ${f(b)}z" fill="${k}" opacity="${o}"/>`};
 const r='#c98585',t='#cba988',g='#9cca8e',v='#80cbae',y='#c9c588',c='#84c4cc',b='#8a92ca',p='#c88aca';let o='';
 for(const a of [[822,885,813,868,r],[888,992,915,1018,r],[993,1024,1030,1068,r],[1045,1083,1130,1167,r],[1083,1094,1218,1229,r,.55],[1096,1130,868,900,t],[1130,1182,1068,1117,t],[1170,1213,1167,1206,t],[1222,1232,1241,1255,t]])o+=rb(0,a[0],a[1],296,a[2],a[3],a[4],a[5]);
 for(const a of [[813,868,992,1080,v,.42],[915,1018,800,894,g],[1030,1076,894,950,t,.5],[1076,1090,1081,1093,y],[1090,1118,1168,1192,y,.55],[1130,1180,1106,1142,g,.45],[1180,1206,940,966,y],[1190,1206,1208,1218,y],[1218,1231,1143,1157,v,.5],[868,880,1240,1252,v,.5],[880,890,1193,1205,v,.3],[1240,1252,966,978,c,.55],[1106,1118,1216,1230,t,.4]])o+=rb(300,a[0],a[1],549,a[2],a[3],a[4],a[5]);
 let y0=813;
 [[16,813],[56,842],[14,902],[11,926],[11,950],[10,972],[9,1000],[9,1050],[9,1085],[9,1130],[7,1185],[7,1228]].forEach(([w,d])=>{o+=rb(553,y0,y0+w,860,d,d+w,b,.45);y0+=w});
 y0=992;o+=rb(553,992,1080,800,780,855,p,.55);y0=1068;
 [[7,930],[6,985],[6,1050],[6,1120]].forEach(([w,d])=>{o+=rb(553,y0,y0+w,850,d,d+w*1.1,p,.5);y0+=w});
 for(const a of [[1106,1119,975,p],[1119,1130,1045,p],[1130,1141,1100,p],[1141,1150,1185,p],[1150,1158,1150,b],[1168,1178,1000,b],[1178,1186,1070,b],[1186,1195,1210,p],[1206,1214,1090,c],[1214,1222,1130,c],[1222,1230,1240,c],[1242,1248,1225,r],[965,975,1270,b],[952,960,1250,b],[938,946,1225,b]])o+=rb(553,a[0],a[1],810,a[2],a[2]+(a[1]-a[0]),a[3],.48);
 for(const [a,z] of [[813,901],[915,1018],[1030,1119],[1130,1207],[1218,1230],[1241,1250]])o+=R(295,a,301,z,'#2a2a2a');
 for(const [a,z] of [[813,979],[990,1094],[1106,1158],[1168,1195],[1206,1230],[1241,1250]])o+=R(547,a,553,z,'#222');
 for(const a of [[272,856,36,'unknown'],[279,970,22,'blond'],[275,1078,28,'fair-hull'],[279,1171,22,'black'],[277,1228,26,'brown'],[534,893,16,'blue'],[530,1134,24,'brown'],[530,1185,22,'green'],[530,1222,24,'yellow']])o+=T(...a,14);
 return ['99 813 654 432',o];
},
parallel(){
 const r=rng(77),g=()=>(r()+r()-1),u=()=>r()*2-1;const B=[];
 const add=(n,c,fn,op=.4)=>{for(let i=0;i<n;i++){const q=fn(i);B.push([r(),`<path d="M860 ${f(q[0])}L1074 ${f(q[1])}L1320 ${f(q[2])}L1513 ${f(q[3])}" fill="none" stroke="${c}" stroke-width="1.200" opacity="${op}"/>`])}};
 add(260,'#77c79c',()=>[1190+g()*65,1000+g()*150,1190+g()*75,1155+g()*100],.46);
 add(14,'#77c79c',()=>[1150+u()*60,800+u()*60,960+u()*80,1060+u()*80]);
 add(60,'#c4c77c',()=>[1055+g()*70,1010+g()*120,1060+g()*90,1050+g()*90]);
 add(160,'#cc8080',()=>[935+g()*105,1155+g()*110,880+g()*130,900+g()*115],.42);
 add(26,'#cc8080',()=>[960+u()*90,1000+u()*140,900+u()*100,930+u()*110],.38);
 add(4,'#c79ad8',i=>[1240+i*6,1130+i*8,1150+i*9,1175+i*8]);
 B.sort((a,b)=>a[0]-b[0]);
 let o=B.map(b=>b[1]).join('')+`<path d="M1074 813V1245" stroke="#555" stroke-width="2.500"/><path d="M1320 813V1245" stroke="#b4b4b4" stroke-width="5" opacity=".8"/>`;
 [[841,'22'],[905,'20'],[971,'18'],[1036,'16'],[1101,'14'],[1167,'12'],[1232,'10']].forEach(([y,s])=>o+=T(1059,y+5,11,s,14)+`<path d="M1068 ${y}h6" stroke="#333"/>`);
 [[849,'4,500'],[927,'4,000'],[1004,'3,500'],[1081,'3,000'],[1160,'2,500'],[1237,'2,000']].forEach(([y,s])=>o+=T(1299,y+5,24,s,14)+`<path d="M1314 ${y}h6" stroke="#333"/>`);
 return ['860 813 654 432',o];
},
bar(){
 const b='#809dc9',r='#c87e7e',g='#80c8a0',y='#bbca7e';let o='';
 const row=(base,L)=>L.forEach(([x,t,c=b,w=25])=>o+=R(x,t,x+w,base,c)+R(x,t-3,x+w,t,c,.4));
 row(921,[[52,854,b,14],[68,903],[96,894],[125,875],[153,810,r],[182,903],[211,894],[239,875],[267,854],[324,912],[354,894],[382,894],[410,826,g],[438,894],[466,912],[523,854],[553,854,y],[581,864],[609,884],[637,912],[666,903]]);
 row(1105,[[52,990,g,14],[68,1095],[96,1057],[125,1067],[153,990,r],[182,1095],[211,1085],[239,1095],[267,1009,y],[354,1037],[382,1076],[410,1037],[438,1009],[466,1076],[495,1095],[523,1046],[553,1057],[581,1046],[609,1076],[637,1085]]);
 row(1245,[[52,1211,y,14],[153,1162,r],[239,1230],[267,1220],[410,1220],[438,1211],[523,1230],[553,1230],[581,1201,g]]);
 o+=R(52,921,729,923,'#e9e9ee')+R(52,1105,729,1107,'#dfe3ea');
 return ['52 813 677 432',o];
},
pie(){
 const b='#8080c7',r='#c87e7e',g='#80c983';let o='';
 const sec=(x,y,rx,a,e,c)=>{const q=t=>[f(x+rx*Math.sin(t*Math.PI/180)),f(y-rx*1.2*Math.cos(t*Math.PI/180))];return `<path d="M${x} ${y}L${q(a)}A${rx} ${f(rx*1.2)} 0 ${e-a>180?1:0} 1 ${q(e)}z" fill="${c}"/>`};
 o+=E(899,806,65,80,b)+E(1040,801,54,66,b)+`<path d="M1040 801l5 67q-58 0-59-67z" fill="${r}"/>`+E(1191,804,36,42,b)+E(1342,805,34,37,b)+E(1492,806,28,32,b);
 for(const [x,y,rx,a,g0] of [[891,972,30,282,358],[1041,972,28,243,342],[1192,972,26,270,352],[1342,972,25,205,285],[1492,972,24,222,345],[890,1135,24,257,357],[1040,1135,22,258,348],[1191,1135,21,195,352],[1342,1135,21,262,348],[1492,1135,20,218,340]])o+=E(x,y,rx,rx*1.2,b)+sec(x,y,rx,a,g0,r)+sec(x,y,rx,g0,360,g);
 for(const a of [[890,895,52,'United States'],[1041,876,20,'China'],[1192,855,22,'Japan'],[1341,851,36,'Germany'],[1488,846,54,'United Kingdom'],[890,1015,26,'France'],[1041,1014,22,'Brazil'],[1191,1013,14,'Italy'],[1342,1010,20,'India'],[1492,1007,28,'Russia'],[890,1171,30,'Canada'],[1040,1168,34,'Australia'],[1191,1168,48,'South Korea'],[1341,1168,24,'Spain'],[1491,1165,28,'Mexico']])o+=T(...a,13);
 return ['840 813 676 432',o];
}};
define('chart-picture',el=>{const [vb,m]=charts[el.getAttribute('kind')]();
 return `<style>:host{display:block;overflow:hidden}:host([kind=treemap]){overflow:visible}svg{display:block;width:100%;height:100%;font-family:"Liberation Sans",sans-serif}:host([kind=treemap]) svg{overflow:visible}</style><svg viewBox="${vb}" preserveAspectRatio="none">${m}</svg>`});

/* ---------- slide ---------- */
define('slide-page',`<style>:host{display:flex;flex-direction:column;align-items:flex-start;box-sizing:border-box;width:3508px;height:2480px;border:3px solid #2e3f57;border-bottom-width:2px;border-right-width:2px;padding:101px 0 0 275px;background:#fff;overflow:hidden}::slotted(browser-window){margin-top:168px}</style><slot name="banner"></slot><slot></slot>`);
define('title-banner',el=>{const w=[669,370,403],g=[0,23,17];return `<style>:host{display:flex;align-items:center;box-sizing:border-box;width:1641px;height:138px;flex:none;padding:0 0 8px 41px;background:#0ff;color:#2e3f57;font:italic 700 98px/130px "Open Sans","Noto Sans",sans-serif}</style>${el.textContent.trim().split(' ').map((t,i)=>`<fit-text w="${w[i]}" stretch style="margin-left:${g[i]}px">${t}</fit-text>`).join(' ')}`});
define('browser-window',`<style>:host{display:flex;flex-direction:column;width:2953px;height:1661px;flex:none;background:#f1f1f1;overflow:hidden}</style><slot></slot>`);

define('tab-strip',`<style>
:host{display:flex;align-items:stretch;height:55px;flex:none;background:#cbcbcb;font-size:22px;color:#222;box-shadow:inset 0 -2px #999}
.tab{width:405px;display:flex;align-items:center;box-sizing:border-box;padding:3px 35px 0 44px;position:relative;z-index:0}
.shape{position:absolute;inset:0;z-index:-1}
.r{font:bold 33px/40px Roboto,"Liberation Sans",sans-serif;width:37px;color:#000;-webkit-text-stroke:1px #000}
.tab app-icon{margin-left:auto}
.new{margin-top:13px;margin-left:-4px}
.win{margin-left:auto;display:flex;align-items:center;padding-bottom:5px}
.p{margin-right:55px;color:#f3f3f3;-webkit-text-stroke:3px #505050;paint-order:stroke fill;font-size:22px}
app-icon+app-icon{margin-left:66px}
</style>
<div class="tab"><svg class="shape" width="475" height="55"><path d="M0 54H11L36 2H382L406 54H475V55H0z" fill="#f1f1f1"/><path d="M0 54H11L36 1.500H382L406 54H475" fill="none" stroke="#999" stroke-width="2"/></svg><span class="r">R</span><fit-text w="49">RAW</fit-text><app-icon name="closetab"></app-icon></div>
<svg class="new" width="66" height="33"><path d="M1 1h50q3 0 4 3l9 25q1 3-3 3H16q-4 0-5-3z" fill="#d2d2d2" stroke="#aaa" stroke-width="2"/></svg>
<div class="win"><fit-text class="p" w="81">Person 1</fit-text><app-icon name="min"></app-icon><app-icon name="restore"></app-icon><app-icon name="closewin"></app-icon><span style="width:35px"></span></div>`);

define('tool-bar',`<style>
:host{display:flex;align-items:center;height:70px;flex:none;box-sizing:border-box;padding:0 22px 0 23px}
.url{display:flex;align-items:center;width:2530px;height:54px;box-sizing:border-box;margin-left:20px;border:2px solid #a6a6a6;border-radius:4px;background:#fff;padding:0 11px 0 13px;font-size:25px;line-height:30px;color:#111}
fit-text{margin-left:10px}
</style><app-icon name="back"></app-icon><app-icon name="forward" style="margin-left:27px"></app-icon><app-icon name="reload" style="margin-left:27px"></app-icon>
<div class="url"><app-icon name="info"></app-icon><fit-text w="204">app.rawgraphs.io</fit-text><app-icon name="star" style="margin-left:auto"></app-icon></div>
<app-icon name="hand" style="margin-left:15px"></app-icon><app-icon name="dropper" style="margin:14px 0 0 31px"></app-icon><app-icon name="swirl" style="margin-left:19px"></app-icon><app-icon name="dots" style="margin-left:39px"></app-icon>`);

const marks=[['projectes',870,94,921],['Arc',1040,34,1092],['Desp',1152,52,1203],['112',1281,36,1333],['PSiA',1396,46,1448],['cursos',1519,65,1570],['Zü',1662,26,1713],['read',1765,45,1816],['Plastic',1888,64,1940],['IAAC',2031,50,2082],['see',2157,35,2208],['tools',2269,52,2319],['llo',2397,25,2449],['Hab',2500,41,2551],['Cart',2618,43,2670],['Dat',2738,37,2789]];
define('bookmark-item',el=>{const w=+el.getAttribute('w');return `<style>:host{display:flex;align-items:center;flex:none}fit-text{margin-left:26px}</style><app-icon name="folder"></app-icon><fit-text w="${w}">${el.textContent}</fit-text>`});
define('bookmark-bar',()=>{let o='';marks.forEach((m,i)=>{const e=m[1]+51+m[2],n=i<15?marks[i+1][1]:2867;o+=`<bookmark-item w="${m[2]}" style="margin-right:${n-e}px">${m[0]}</bookmark-item>`});
return `<style>:host{display:flex;align-items:center;height:53px;flex:none;box-sizing:border-box;padding:0 0 3px 22px;border-bottom:2px solid #b4b4b4;font-size:22.500px;line-height:28px;color:#111}</style>
<app-icon name="apps"></app-icon><fit-text w="115" style="margin-left:24px">Aplicacions</fit-text>
<app-icon name="globe" style="margin-left:24px"></app-icon><app-icon name="map" style="margin-left:24px"></app-icon><app-icon name="gmail" style="margin-left:25px"></app-icon><app-icon name="aserif" style="margin-left:23px"></app-icon><app-icon name="cgreen" style="margin-left:24px"></app-icon><app-icon name="spot" style="margin-left:23px"></app-icon><app-icon name="pin" style="margin:0 26px 0 23px"></app-icon>
${o}<fit-text w="14" style="font-size:26px;color:#555">»</fit-text><span style="width:1px;height:31px;margin:0 21px 0 22px;background:#c5c5c5"></span><bookmark-item w="237">Altres adreces d'interès</bookmark-item>`});

/* ---------- page ---------- */
define('detail-card',`<style>
:host{display:block;width:505px;height:886px;box-sizing:border-box;padding:33px 30px 0;border-radius:4px;background:#fff;box-shadow:0 2px 4px rgba(0,0,0,.12);font-family:Roboto,"Liberation Sans",sans-serif;color:#444}
h2{margin:0;font-size:28px;line-height:44px;font-weight:700;height:45px;color:#2c2c2c}
h3{margin:0;font-size:25.500px;line-height:48px;font-weight:400;color:#8b8b8b;height:48px}
chart-picture{width:430px;height:249px;margin:24px 0 51px 6px}
p{margin:0;font-size:23px;line-height:35.300px}p fit-text{display:block}a{color:#8f8f8f}
</style><h2><fit-text w="124">Treemap</fit-text></h2><h3><fit-text w="256">Hierarchy (weighted)</fit-text></h3>
<chart-picture kind="treemap"></chart-picture>
<p>${[['A space filling visualization of data',400],['hierarchies and proportion between',408],['elements. The different hierarchical',405],['levels create visual clusters through',413],['the subdivision into rectangles',354],["proportionally to each element's value.",438],['Treemaps are useful to represent the',418],['different proportion of nested',337],['hierarchical data structures.',327],['Based on',103]].map(a=>`<fit-text w="${a[1]}">${a[0]}</fit-text>`).join('')}<a><fit-text w="433">http://bl.ocks.org/mbostock/4063582</fit-text></a></p>`);

const subs={'Dispersion':122,'Distribution':137,'Hierarchy':110,'Hierarchy (weighted)':237,'Multi categorical':193,'Multivariate':139,'Other':63};
define('chart-card',el=>{const a=n=>el.getAttribute(n);return `<style>
:host{display:block;box-sizing:border-box;width:363px;height:297px;border-radius:4px;background:#fff;box-shadow:0 2px 3px rgba(0,0,0,.16);overflow:hidden;font-family:Roboto,"Liberation Sans",sans-serif;color:#444}
chart-picture{height:192px}
.t{padding:16px 16px 0;font-size:27px;line-height:40px;height:40px;display:flex;align-items:center}
.s{padding:0 16px;font-size:23.500px;line-height:36px;color:#ababab;display:flex}
:host([kind=packing]) .t{color:#000}:host([kind=packing]) .s{color:#8f8f8f}
:host([kind=sel]){background:#0cc4a6;color:#fff}:host([kind=sel]) .s{color:#79dfcf}
</style><chart-picture kind="${a('kind')}"></chart-picture><div class="t"><fit-text w="${a('w')}">${a('name')}</fit-text></div><div class="s"><fit-text w="${subs[a('sub')]}">${a('sub')}</fit-text></div>`});

const cards=[['contour','Contour Plot','Dispersion',152],['hull','Convex Hull','Dispersion',144],['hex','Hexagonal Binning','Dispersion',233],['scatter','Scatter Plot','Dispersion',143],
['voronoi','Voronoi Tessellation','Dispersion',246],['bees','Beeswarm Plot','Distribution',182],['box','Box plot','Distribution',99],['circ','Circular Dendrogram','Hierarchy',258],
['cluster','Cluster Dendrogram','Hierarchy',249],['packing','Circle Packing','Hierarchy (weighted)',175],['sunburst','Sunburst','Hierarchy (weighted)',115],['sel','Treemap','Hierarchy (weighted)',106],
['alluvial','Alluvial Diagram','Multi categorical',204],['parallel','Parallel Coordinates','Multivariate',247],['bar','Bar chart','Other',113],['pie','Pie chart','Other',108]];
define('page-view',()=>`<style>
:host{display:flex;flex:1;min-height:0;background:#eaeaea;position:relative}
.wrap{flex:1;display:flex;align-items:flex-start;padding:70px 0 0 364px;gap:58px}
.grid{display:grid;grid-template-columns:repeat(4,363px);column-gap:58.600px;row-gap:38.200px}
.bar{width:33px;background:#f1f1f1;display:flex;flex-direction:column;align-items:center}
.bar i{width:27px;height:326px;background:#c1c1c1;margin-top:311px}
.bar svg{display:block;flex:none}
.mark{position:absolute;left:878.500px;top:1032.500px;width:441px;height:359px;box-sizing:border-box;border:12px solid #2e3f57}
</style><div class="wrap"><detail-card></detail-card><div class="grid">${cards.map(c=>`<chart-card kind="${c[0]}" name="${c[1]}" sub="${c[2]}" w="${c[3]}"></chart-card>`).join('')}</div></div>
<div class="bar"><svg width="18" height="10" style="margin-top:14px"><path d="M1 9L9 1l8 8z" fill="#505050"/></svg><i></i><svg width="18" height="10" style="margin:auto 0 10px"><path d="M1 1l8 8 8-8z" fill="#505050"/></svg></div>
<div class="mark"></div>`);

/* ---------- taskbar ---------- */
define('task-button',el=>`<style>:host{display:flex;justify-content:center;flex:none;width:95.350px;height:77px;box-sizing:border-box;padding-top:14.500px;position:relative}
:host([open])::after{content:"";position:absolute;left:8.500px;width:78.500px;bottom:0;height:5px;background:#76b9ed}
:host([active]){background:linear-gradient(90deg,#4c443e 92.500%,#2a241f 92.500%,#2a241f 93.500%,#433b35 93.500%)}:host([active])::after{left:0;width:100%}
:host([multi])::after{background:linear-gradient(90deg,#76b9ed 79%,#5a8ab0 79%)}</style><app-icon name="${el.getAttribute('icon')}"></app-icon>`);
define('task-bar',`<style>
:host{display:flex;height:77px;flex:none;background:#1f170f;color:#f0f0f0;font-size:22.500px}
.tray{margin-left:auto;display:flex;align-items:center;padding-right:8px}
.clock{display:flex;flex-direction:column;align-items:center;margin-left:29px;line-height:36px;font-size:24px}
.end{width:7px;border-left:2px solid #777}
</style>
<task-button icon="win" style="width:94px"></task-button><task-button icon="task" style="margin-left:-2px;margin-right:2px"></task-button>
${['tv','wa','explorer open multi','cmd','rhino','droid','qgis','id','ps','ai open','robot','blender','atom','bird','chrome open active','spotg open','sticky open','npp open','qgis open','excel open'].map(s=>{const [a,...b]=s.split(' ');return `<task-button icon="${a}" ${b.join(' ')}></task-button>`}).join('')}
<div class="tray"><app-icon name="people"></app-icon><app-icon name="chev" style="margin-left:41px"></app-icon><app-icon name="batt" style="margin-left:17px"></app-icon><app-icon name="cloud" style="margin-left:15px;margin-top:4px"></app-icon><app-icon name="wifi" style="margin-left:17px;margin-top:2px"></app-icon><app-icon name="mute" style="margin-left:16px"></app-icon>
<fit-text w="40" style="margin:0 0 0 21px">CAT</fit-text>
<div class="clock"><fit-text w="54">13:27</fit-text><fit-text w="117">03/07/2018</fit-text></div>
<app-icon name="note" style="margin:16px 15px 0 34px"></app-icon></div><div class="end"></div>`);
</script>
</body>
</html>
